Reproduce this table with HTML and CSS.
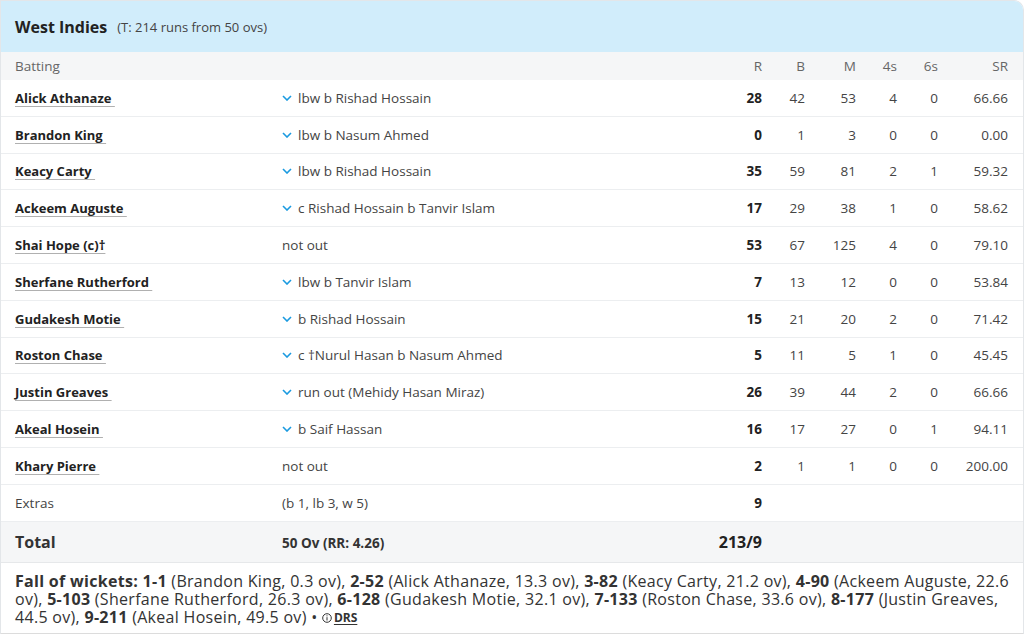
FILE: index.html
```html
<!DOCTYPE html>
<html lang="en">
<head>
<meta charset="utf-8">
<title>West Indies scorecard</title>
<link rel="stylesheet" href="styles.css">
</head>
<body>
<div class="card">
  <div class="team-head">
    <span class="team-name">West Indies</span>
    <span class="target">(T: 214 runs from 50 ovs)</span>
  </div>
  <div class="row head">
    <div>Batting</div><div></div>
    <div class="num">R</div><div class="num">B</div><div class="num">M</div><div class="num">4s</div><div class="num">6s</div><div class="num">SR</div>
  </div>

  <div class="row"><div><span class="bat">Alick Athanaze </span></div><div class="dis"><svg class="chev" viewBox="0 0 10 6"><polyline points="1,1 5,5 9,1"/></svg>lbw b Rishad Hossain</div><div class="num runs">28</div><div class="num">42</div><div class="num">53</div><div class="num">4</div><div class="num">0</div><div class="num">66.66</div></div>
  <div class="row"><div><span class="bat">Brandon King </span></div><div class="dis"><svg class="chev" viewBox="0 0 10 6"><polyline points="1,1 5,5 9,1"/></svg>lbw b Nasum Ahmed</div><div class="num runs">0</div><div class="num">1</div><div class="num">3</div><div class="num">0</div><div class="num">0</div><div class="num">0.00</div></div>
  <div class="row"><div><span class="bat">Keacy Carty </span></div><div class="dis"><svg class="chev" viewBox="0 0 10 6"><polyline points="1,1 5,5 9,1"/></svg>lbw b Rishad Hossain</div><div class="num runs">35</div><div class="num">59</div><div class="num">81</div><div class="num">2</div><div class="num">1</div><div class="num">59.32</div></div>
  <div class="row"><div><span class="bat">Ackeem Auguste </span></div><div class="dis"><svg class="chev" viewBox="0 0 10 6"><polyline points="1,1 5,5 9,1"/></svg>c Rishad Hossain b Tanvir Islam</div><div class="num runs">17</div><div class="num">29</div><div class="num">38</div><div class="num">1</div><div class="num">0</div><div class="num">58.62</div></div>
  <div class="row"><div><span class="bat">Shai Hope (c)†</span></div><div class="dis plain">not out</div><div class="num runs">53</div><div class="num">67</div><div class="num">125</div><div class="num">4</div><div class="num">0</div><div class="num">79.10</div></div>
  <div class="row"><div><span class="bat">Sherfane Rutherford </span></div><div class="dis"><svg class="chev" viewBox="0 0 10 6"><polyline points="1,1 5,5 9,1"/></svg>lbw b Tanvir Islam</div><div class="num runs">7</div><div class="num">13</div><div class="num">12</div><div class="num">0</div><div class="num">0</div><div class="num">53.84</div></div>
  <div class="row"><div><span class="bat">Gudakesh Motie </span></div><div class="dis"><svg class="chev" viewBox="0 0 10 6"><polyline points="1,1 5,5 9,1"/></svg>b Rishad Hossain</div><div class="num runs">15</div><div class="num">21</div><div class="num">20</div><div class="num">2</div><div class="num">0</div><div class="num">71.42</div></div>
  <div class="row"><div><span class="bat">Roston Chase </span></div><div class="dis"><svg class="chev" viewBox="0 0 10 6"><polyline points="1,1 5,5 9,1"/></svg>c †Nurul Hasan b Nasum Ahmed</div><div class="num runs">5</div><div class="num">11</div><div class="num">5</div><div class="num">1</div><div class="num">0</div><div class="num">45.45</div></div>
  <div class="row"><div><span class="bat">Justin Greaves </span></div><div class="dis"><svg class="chev" viewBox="0 0 10 6"><polyline points="1,1 5,5 9,1"/></svg>run out (Mehidy Hasan Miraz)</div><div class="num runs">26</div><div class="num">39</div><div class="num">44</div><div class="num">2</div><div class="num">0</div><div class="num">66.66</div></div>
  <div class="row"><div><span class="bat">Akeal Hosein </span></div><div class="dis"><svg class="chev" viewBox="0 0 10 6"><polyline points="1,1 5,5 9,1"/></svg>b Saif Hassan</div><div class="num runs">16</div><div class="num">17</div><div class="num">27</div><div class="num">0</div><div class="num">1</div><div class="num">94.11</div></div>
  <div class="row"><div><span class="bat">Khary Pierre </span></div><div class="dis plain">not out</div><div class="num runs">2</div><div class="num">1</div><div class="num">1</div><div class="num">0</div><div class="num">0</div><div class="num">200.00</div></div>
  <div class="row extras"><div>Extras</div><div class="dis plain">(b 1, lb 3, w 5)</div><div class="num runs">9</div><div></div><div></div><div></div><div></div><div></div></div>
  <div class="row total"><div class="total-label">Total</div><div class="total-ov">50 Ov (RR: 4.26)</div><div class="num total-runs">213/9</div><div></div><div></div><div></div><div></div><div></div></div>

  <div class="fow">
    <b>Fall of wickets:</b> <b>1-1</b> (Brandon King, 0.3 ov), <b>2-52</b> (Alick Athanaze, 13.3 ov), <b>3-82</b> (Keacy Carty, 21.2 ov), <b>4-90</b> (Ackeem Auguste, 22.6 ov), <b>5-103</b> (Sherfane Rutherford, 26.3 ov), <b>6-128</b> (Gudakesh Motie, 32.1 ov), <b>7-133</b> (Roston Chase, 33.6 ov), <b>8-177</b> (Justin Greaves, 44.5 ov), <b>9-211</b> (Akeal Hosein, 49.5 ov) • <span class="drs"><svg class="info" viewBox="0 0 10 10"><circle cx="5" cy="5" r="4.3"/><line x1="5" y1="4.2" x2="5" y2="7.5"/><circle class="dot" cx="5" cy="2.8" r="0.6"/></svg>DRS</span>
  </div>
</div>
</body>
</html>
```
FILE: styles.css
```css
* { box-sizing: border-box; }
html, body { margin: 0; padding: 0; background: #fff; }
body {
  font-family: "Open Sans", "Noto Sans", "Liberation Sans", sans-serif;
  color: #333;
  width: 1024px;
  height: 634px;
  overflow: hidden;
}
.card {
  border: 1px solid #e3e6e9;
  border-top-right-radius: 10px;
  border-bottom: 2px solid #dcdcdc;
  overflow: hidden;
}
.team-head {
  background: #d1edfb;
  height: 51px;
  display: flex;
  align-items: center;
  gap: 10px;
  padding: 0 14px;
}
.team-name { font-weight: 700; font-size: 16px; color: #222; }
.target { font-size: 13px; color: #444; }
.row {
  display: grid;
  grid-template-columns: 267px 1fr 60px 43px 51px 41px 41px 70px;
  padding: 0 15px 0 14px;
  align-items: center;
  height: 36.8px;
  border-bottom: 1px solid #eceef0;
  font-size: 13.5px;
  color: #444;
}
.row.head {
  background: #f5f6f7;
  height: 28px;
  color: #666;
  border-bottom: none;
}
.num { text-align: right; }
.runs { font-weight: 700; color: #222; }
.bat {
  font-weight: 700;
  font-size: 13px;
  color: #222;
  text-decoration: underline;
  text-decoration-color: #b0b0b0;
  text-underline-offset: 3px;
  white-space: pre;
}
.dis { display: flex; align-items: center; color: #444; }
.chev {
  width: 10px;
  height: 6px;
  margin-right: 6px;
  fill: none;
  stroke: #1a9ae0;
  stroke-width: 1.6;
}
.extras { color: #444; }
.total {
  background: #f5f6f7;
  height: 41px;
  border-bottom: 1px solid #e6e8ea;
}
.total-label { font-size: 16px; font-weight: 700; color: #333; }
.total-ov { font-weight: 700; font-size: 13.5px; color: #333; padding-top: 3px; }
.total-runs { font-weight: 700; font-size: 16px; color: #222; }
.fow {
  padding: 9px 10px 6px 14px;
  font-size: 16px;
  letter-spacing: 0.3px;
  line-height: 18px;
  color: #333;
}
.fow b { font-weight: 700; }
.drs {
  font-weight: 700;
  font-size: 12px;
  letter-spacing: 0;
  text-decoration: underline;
  text-underline-offset: 2px;
  display: inline-flex;
  align-items: center;
  gap: 2px;
}
.info {
  width: 10px;
  height: 10px;
  fill: none;
  stroke: #333;
  stroke-width: 1;
}
.info .dot { fill: #333; stroke: none; }
```
